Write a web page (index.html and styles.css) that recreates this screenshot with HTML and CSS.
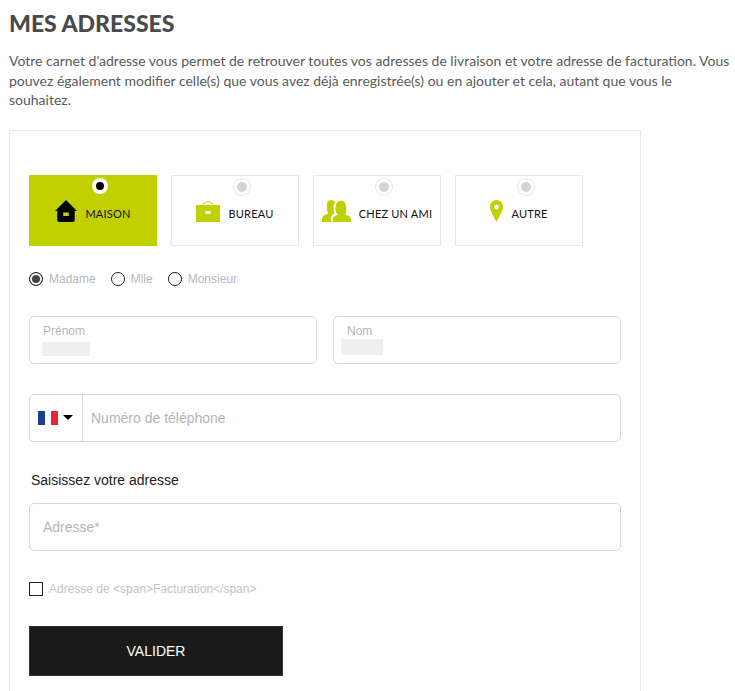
FILE: index.html
```html
<!DOCTYPE html>
<html lang="fr">
<head>
<meta charset="utf-8">
<title>Mes adresses</title>
<link rel="stylesheet" href="styles.css">
</head>
<body>
<main class="page">
  <h1 class="title">MES ADRESSES</h1>
  <p class="intro">Votre carnet d'adresse vous permet de retrouver toutes vos adresses de livraison et votre adresse de facturation. Vous pouvez également modifier celle(s) que vous avez déjà enregistrée(s) ou en ajouter et cela, autant que vous le souhaitez.</p>
  <section class="card">
    <div class="tiles">
      <div class="tile tile-active">
        <span class="dot"></span>
        <svg class="ico" width="22" height="22" viewBox="0 0 24 22" preserveAspectRatio="none"><path fill="#000" fill-rule="evenodd" d="M12 0 L24 11 L21.5 11 L21.5 20 Q21.5 22 19.500 22 L4.500 22 Q2.500 22 2.500 20 L2.500 11 L0 11 Z M9 12.500 V16 H15 V12.500 Z"/></svg>
        <span class="tile-label">MAISON</span>
      </div>
      <div class="tile">
        <span class="dot"></span>
        <svg class="ico" width="24" height="22" viewBox="0 0 24 22"><path fill="#c1d100" fill-rule="evenodd" d="M0 5 H24 V22 H0 Z M9.500 11 V14 H14.500 V11 Z"/><path fill="none" stroke="#c1d100" stroke-width="1.200" d="M7.500 4 Q12 -1 16.500 4"/></svg>
        <span class="tile-label">BUREAU</span>
      </div>
      <div class="tile">
        <span class="dot"></span>
        <svg class="ico" width="29" height="22" viewBox="0 0 30 22" preserveAspectRatio="none"><path fill="#c1d100" d="M0 22 V18.500 Q0 16 3 15 L6.500 13.500 Q4.500 10 5 5 Q5.500 0 9.500 0 Q13 0 13.800 3 Q11.800 4 11.800 8 Q11.800 11 13 13 L10.500 15 Q9.500 16 9.500 18 L9.500 22 Z"/><path fill="#c1d100" d="M11 22 V19 Q11 17 14 15.800 L17 14.500 Q13.500 13.500 14 7 Q14.500 0.500 19.500 0.500 Q24.500 0.500 25 6.500 Q25.500 12 24 14.500 L27 15.800 Q30 17 30 19 V22 Z"/></svg>
        <span class="tile-label">CHEZ UN AMI</span>
      </div>
      <div class="tile">
        <span class="dot"></span>
        <svg class="ico" width="13" height="22" viewBox="0 0 14 22" preserveAspectRatio="none"><path fill="#c1d100" fill-rule="evenodd" d="M7 0 C11 0 14 3 14 7 C14 11 10 16 7 22 C4 16 0 11 0 7 C0 3 3 0 7 0 Z M7 4.500 A2.500 2.500 0 1 0 7 9.500 A2.500 2.500 0 1 0 7 4.500 Z"/></svg>
        <span class="tile-label">AUTRE</span>
      </div>
    </div>

    <div class="civility">
      <span class="radio-item"><span class="radio radio-on"></span>Madame</span>
      <span class="radio-item"><span class="radio"></span>Mlle</span>
      <span class="radio-item"><span class="radio"></span>Monsieur</span>
    </div>

    <div class="names">
      <div class="field field-name">
        <span class="float-label">Prénom</span>
        <span class="mask mask-first"></span>
      </div>
      <div class="field field-name">
        <span class="float-label">Nom</span>
        <span class="mask mask-last"></span>
      </div>
    </div>

    <div class="field field-phone">
      <div class="flag-box">
        <span class="flag"><i class="blue"></i><i class="white"></i><i class="red"></i></span>
        <span class="caret"></span>
      </div>
      <span class="placeholder phone-ph">Numéro de téléphone</span>
    </div>

    <p class="addr-heading">Saisissez votre adresse</p>

    <div class="field field-addr">
      <span class="placeholder">Adresse*</span>
    </div>

    <div class="billing">
      <span class="checkbox"></span>
      <span>Adresse de &lt;span&gt;Facturation&lt;/span&gt;</span>
    </div>

    <button class="submit" type="button">VALIDER</button>
  </section>
</main>
</body>
</html>
```

FILE: styles.css
```css
* { box-sizing: border-box; }
html, body { margin: 0; padding: 0; background: #fff; }
body { height: 691px; overflow: hidden; font-family: "Liberation Sans", Arial, sans-serif; }
.page { padding: 11px 0 0 9px; }
.title {
  margin: 0;
  font: 900 23px/24px Lato, sans-serif;
  color: #4a4a4a;
}
.intro {
  margin: 16px 0 0;
  width: 726px;
  font: 400 14px/19.500px Lato, sans-serif;
  color: #5a5a5a;
}
.card {
  margin-top: 20px;
  width: 632px;
  height: 561px;
  padding: 44px 19px 0;
  border: 1px solid #e9e9e9;
  border-bottom: 0;
}
.tiles { display: flex; gap: 14px; }
.tile {
  position: relative;
  width: 128px;
  height: 71px;
  display: flex;
  align-items: center;
  justify-content: center;
  gap: 8px;
  padding-top: 8px;
  border: 1px solid #e8e8e8;
}
.tile-active { background: #c1d100; border-color: #c1d100; }
.tile-label { font: 400 11px/14px Lato, sans-serif; color: #111; letter-spacing: .2px; }
.ico { display: block; flex: none; margin-bottom: 6px; }
.dot {
  position: absolute;
  top: 3px;
  left: 50%;
  margin-left: -1px;
  width: 16px;
  height: 16px;
  border-radius: 50%;
  background: #d4d4d4;
  border: 3px solid #fff;
  box-shadow: 0 0 0 1px #e6e6e6;
}
.tile-active .dot { background: #000; border: 4px solid #fff; box-shadow: none; top: 2px; }
.civility { display: flex; gap: 15px; margin-top: 26px; height: 14px; align-items: center; }
.radio-item { display: flex; align-items: center; gap: 6px; font-size: 12px; color: #b8b8b8; }
.radio {
  width: 14px;
  height: 14px;
  border-radius: 50%;
  border: 1px solid #222;
  background: #fff;
}
.radio-on { background: #444; box-shadow: inset 0 0 0 2px #fff; }
.names { display: flex; gap: 16px; margin-top: 30px; }
.field {
  position: relative;
  border: 1px solid #d8d8d8;
  border-radius: 5px;
  height: 48px;
  background: #fff;
}
.field-name { width: 288px; }
.float-label {
  position: absolute;
  top: 7px;
  left: 13px;
  font-size: 12px;
  line-height: 14px;
  color: #b5b5b5;
}
.mask { position: absolute; background: #efefef; }
.mask-first { left: 12px; top: 25px; width: 48px; height: 14px; }
.mask-last { left: 7px; top: 22px; width: 42px; height: 16px; }
.field-phone { display: flex; align-items: center; margin-top: 30px; width: 592px; }
.flag-box {
  display: flex;
  align-items: center;
  gap: 5px;
  height: 100%;
  width: 53px;
  padding-left: 8px;
  border-right: 1px solid #d8d8d8;
  flex: none;
}
.flag { display: flex; width: 20px; height: 14px; }
.flag i { flex: 1; display: block; }
.blue { background: #1c3f94; }
.white { background: #fff; }
.red { background: #ee2436; }
.caret {
  width: 0;
  height: 0;
  border-left: 5px solid transparent;
  border-right: 5px solid transparent;
  border-top: 5px solid #000;
}
.placeholder { font-size: 14px; line-height: 46px; color: #b5b5b5; }
.phone-ph { margin-left: 8px; }
.addr-heading {
  margin: 30px 0 0 2px;
  font-size: 14px;
  line-height: 16px;
  color: #222;
}
.field-addr { margin-top: 15px; width: 592px; padding-left: 13px; }
.billing {
  display: flex;
  align-items: center;
  gap: 6px;
  margin-top: 31px;
  height: 14px;
  font-size: 12px;
  color: #c4c4c4;
}
.checkbox { width: 14px; height: 14px; border: 1px solid #222; background: #fff; flex: none; }
.submit {
  display: block;
  margin-top: 30px;
  width: 254px;
  height: 50px;
  border: 1px solid #333;
  background: #1a1a1a;
  color: #fff;
  font: 400 14px "Liberation Sans", Arial, sans-serif;
}
```
